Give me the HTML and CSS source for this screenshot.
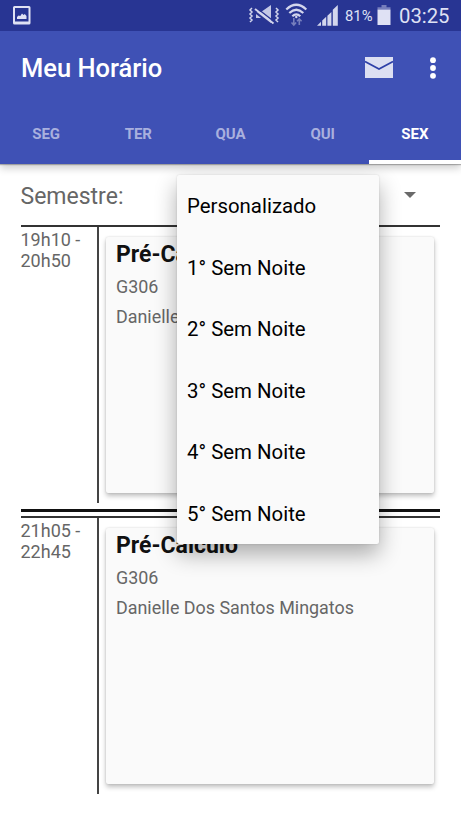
FILE: index.html
```html
<!DOCTYPE html>
<html lang="pt-BR">
<head>
<meta charset="utf-8">
<title>Meu Horário</title>
<link rel="stylesheet" href="styles.css">
</head>
<body>
<div class="screen">
  <header class="appbar">
    <div class="status">
      <svg class="status-left" width="50" height="31" viewBox="0 0 50 31">
        <path d="M14.500 6h14.500q1.500 0 1.500 1.500v15.500q0 1.500-1.500 1.500h-14.500q-1.500 0-1.500-1.500v-15.500q0-1.500 1.500-1.500zM15 8v13.500h13.500v-13.500z" fill="#dfe1f4" fill-rule="evenodd"/>
        <path d="M17 19v-2l1.500-1.500 1.800.4 1.700-2.400 1.600 1.500 1.200-1 1.700 2v3z" fill="#dfe1f4"/>
      </svg>
      <svg class="status-icons" width="95" height="31" viewBox="245 0 95 31" fill="none" stroke="#d3d6ed">
        <path d="M252 8l-2 2 2 2-2 2 2 2-2 2 2 2-2 2M276 8l2 2-2 2 2 2-2 2 2 2-2 2 2 2" stroke-width="1.500"/>
        <path d="M256 12h5l10-7v18.500l-9-5.500h-6z" fill="#c3c7e5" stroke="none"/>
        <path d="M256 7.500l18 14" stroke="#2a3592" stroke-width="1.500"/>
        <path d="M255 9l18.500 14.500" stroke-width="2"/>
        <path d="M254.500 11.500l18.500 14.500" stroke="#2a3592" stroke-width="2"/>
        <path d="M286.300 9.500q10-9.500 20 0M289.300 13q7-6.500 14 0M292.300 16.200q4-3.700 8 0" stroke-width="2.200"/>
        <circle cx="296.300" cy="17" r="1.200" fill="#d3d6ed" stroke="none"/>
        <path d="M293.800 18v7M291.500 22.500l2.300 2.500 2.300-2.500M299.300 25v-6M297 21.300l2.300-2.400 2.300 2.400" stroke="#777fbd" stroke-width="1.600"/>
        <path d="M317 25.700l4-4v4zM322.200 25.700v-5.200l4-3.700v8.900zM327.400 25.700v-10l4-3.700v13.700zM332.800 25.700V9.800l5-4.800v20.700z" fill="#d3d6ed" stroke="none"/>
      </svg>
      <span class="percent">81%</span>
      <svg class="battery" width="14" height="31" viewBox="377 0 14 31">
        <path d="M377.500 9.500V7.300h4V5h5v2.300h4v2.200z" fill="#767ebc"/>
        <path d="M377.500 9.500h13V25h-13z" fill="#dfe1f4"/>
      </svg>
      <span class="clock">03:25</span>
    </div>
    <div class="toolbar">
      <h1 class="title">Meu Horário</h1>
      <svg class="mail" width="28" height="21" viewBox="0 0 28 21">
        <path d="M0 0h28v21H0z" fill="#dcdff2"/>
        <path d="M0 4.500l14 7.500 14-7.500" fill="none" stroke="#2e40a8" stroke-width="1.700"/>
      </svg>
      <svg class="more" width="6" height="22" viewBox="0 0 6 22" fill="#fff">
        <circle cx="3" cy="3.200" r="2.900"/><circle cx="3" cy="11" r="2.900"/><circle cx="3" cy="18.800" r="2.900"/>
      </svg>
    </div>
    <nav class="tabs">
      <a class="tab">SEG</a><a class="tab">TER</a><a class="tab">QUA</a><a class="tab">QUI</a><a class="tab active">SEX</a>
    </nav>
  </header>
  <main class="content">
    <div class="filter">
      <span class="label">Semestre:</span>
      <svg class="caret" width="12" height="6" viewBox="0 0 12 6"><path d="M0 0h12L6 6z" fill="#6a6a6a"/></svg>
      <ul class="menu">
        <li>Personalizado</li>
        <li>1° Sem Noite</li>
        <li>2° Sem Noite</li>
        <li>3° Sem Noite</li>
        <li>4° Sem Noite</li>
        <li>5° Sem Noite</li>
      </ul>
    </div>
    <section class="row">
      <div class="time">19h10 -<br>20h50</div>
      <div class="slot">
        <article class="card"><h2>Pré-Calculo</h2><p>G306</p><p>Danielle Dos Santos Mingatos</p></article>
      </div>
    </section>
    <div class="divider"></div>
    <section class="row">
      <div class="time">21h05 -<br>22h45</div>
      <div class="slot">
        <article class="card"><h2>Pré-Calculo</h2><p>G306</p><p>Danielle Dos Santos Mingatos</p></article>
      </div>
    </section>
  </main>
</div>
</body>
</html>
```
FILE: styles.css
```css
* { box-sizing: border-box; }
body, h1, h2, p, ul { margin: 0; padding: 0; }
body { background: #fff; font-family: Roboto, sans-serif; }
svg { display: block; flex: none; }
.screen { width: 461px; height: 820px; overflow: hidden; }

.appbar {
  position: relative;
  height: 164px;
  background: #3f51b5;
  box-shadow: 0 1px 1px rgba(0,0,0,.25), 0 4px 8px rgba(0,0,0,.2);
}
.status { display: flex; height: 31px; background: #283593; color: #dfe1f4; }
.status-icons { margin-left: 195px; }
.percent { width: 32px; margin-left: 5px; font-size: 14.8px; line-height: 33px; }
.clock { margin-left: 8px; font-size: 20.3px; line-height: 32px; }
.toolbar { display: flex; align-items: center; height: 73px; padding: 0 25px 0 21px; }
.title { flex: 1; font-size: 25.5px; font-weight: 500; color: #fff; line-height: 30px; padding-top: 1px; }
.more { margin-left: 37px; }
.tabs { display: flex; height: 60px; }
.tab {
  flex: 1;
  text-align: center;
  font-size: 15px;
  font-weight: 700;
  line-height: 61px;
  color: #a9b0de;
}
.tab.active { color: #fff; border-bottom: 4px solid #fff; }

.content { padding: 0 21px 0 20.5px; }
.filter { position: relative; display: flex; justify-content: space-between; align-items: center; height: 61px; padding-right: 24px; }
.label { font-size: 23px; color: #666; line-height: 30px; margin-top: 5px; }
.menu {
  position: absolute;
  z-index: 2;
  left: 156.5px;
  top: 11px;
  width: 202px;
  height: 369px;
  list-style: none;
  background: #fafafa;
  border-radius: 2px;
  box-shadow: 0 0 2px rgba(0,0,0,.15), 0 10px 22px rgba(0,0,0,.32);
}
.menu li { height: 61.5px; padding-left: 10px; font-size: 20.4px; line-height: 62px; color: #000; }

.row { display: flex; height: 278px; border-top: 2px solid #333; }
.time { width: 76.5px; font-size: 18px; line-height: 21px; color: #666; padding-top: 2px; }
.slot { flex: 1; border-left: 2px solid #444; padding: 10px 6px 0 7px; }
.card {
  height: 256px;
  padding: 4px 10px;
  background: #fafafa;
  border-radius: 2px;
  box-shadow: 0 0 2px rgba(0,0,0,.15), 0 3px 5px rgba(0,0,0,.25);
}
.card h2 { font-size: 23px; font-weight: 700; line-height: 27px; color: #111; }
.card p { font-size: 17.9px; line-height: 29.5px; color: #666; }
.card h2 + p { margin-top: 4px; }
.divider { height: 3px; margin: 6px 0 4px; background: #111; }
```
